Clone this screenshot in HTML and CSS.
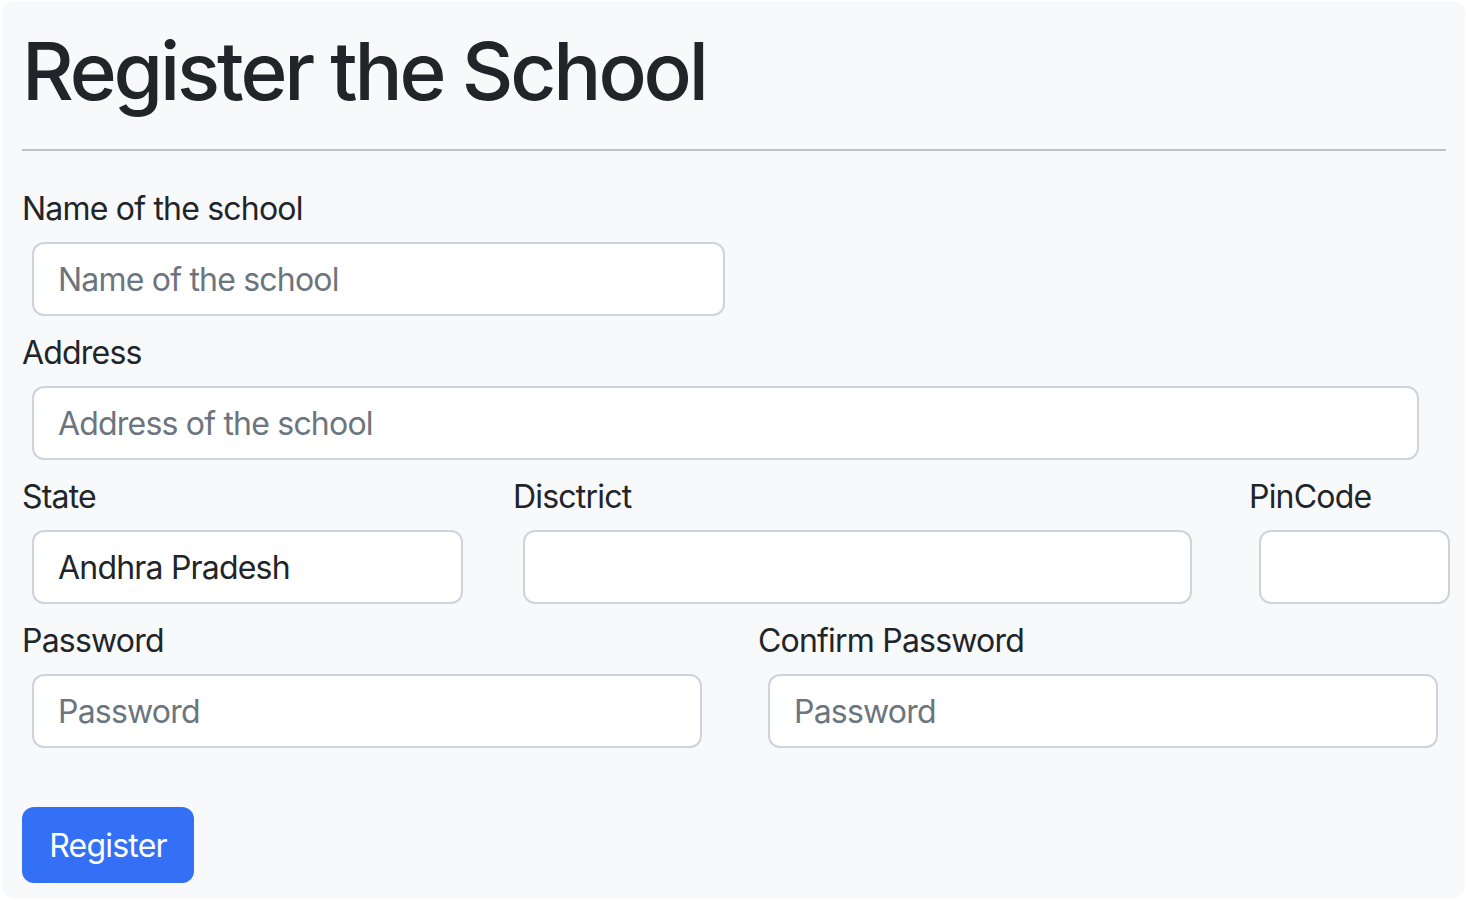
FILE: index.html
```html
<!DOCTYPE html>
<html lang="en">
<head>
<meta charset="utf-8">
<title>Register the School</title>
<link rel="stylesheet" href="styles.css">
</head>
<body>
<div class="panel">
  <h1 class="title">Register the School</h1>
  <hr class="divider">
  <form class="form">
    <div class="field">
      <label class="label">Name of the school</label>
      <input class="input w-name" type="text" placeholder="Name of the school">
    </div>
    <div class="field">
      <label class="label">Address</label>
      <input class="input w-address" type="text" placeholder="Address of the school">
    </div>
    <div class="row row-3">
      <div class="field">
        <label class="label">State</label>
        <input class="input w-state" type="text" value="Andhra Pradesh">
      </div>
      <div class="field">
        <label class="label">Disctrict</label>
        <input class="input w-district" type="text">
      </div>
      <div class="field">
        <label class="label">PinCode</label>
        <input class="input w-pin" type="text">
      </div>
    </div>
    <div class="row row-2">
      <div class="field">
        <label class="label">Password</label>
        <input class="input w-pass" type="password" placeholder="Password">
      </div>
      <div class="field">
        <label class="label">Confirm Password</label>
        <input class="input w-pass" type="password" placeholder="Password">
      </div>
    </div>
    <button class="btn" type="button">Register</button>
  </form>
</div>
</body>
</html>
```

FILE: styles.css
```css
* { box-sizing: border-box; }

html, body {
  margin: 0;
  padding: 0;
  background: #ffffff;
}

body {
  font-family: Inter, "Liberation Sans", sans-serif;
  color: #212529;
}

.panel {
  margin: 1px 1px 0 2px;
  height: 897px;
  padding: 22px 19px 0 20px;
  background: #f8f9fa;
  border-radius: 12px;
}

.title {
  margin: 0;
  font-size: 80px;
  line-height: 96px;
  font-weight: 500;
  letter-spacing: -3.1px;
  color: #212529;
}

.divider {
  margin: 30px 0 0 0;
  height: 2px;
  border: none;
  background: #c0c1c2;
}

.form {
  display: flex;
  flex-direction: column;
  padding-top: 27px;
}

.field {
  display: flex;
  flex-direction: column;
  align-items: flex-start;
}

.form > .field + .field,
.form > .field + .row,
.form > .row + .row {
  margin-top: 6px;
}

.label {
  font-size: 32px;
  line-height: 48px;
  padding-top: 7px;
  margin-bottom: 9px;
  letter-spacing: -0.8px;
  color: #212529;
}

.input {
  margin-left: 10px;
  height: 74px;
  padding: 0 24px;
  font-family: Inter, "Liberation Sans", sans-serif;
  font-size: 32px;
  letter-spacing: -0.8px;
  color: #212529;
  background: #ffffff;
  border: 2px solid #ced4da;
  border-radius: 12px;
  outline: none;
}

.input::placeholder {
  color: #6c757d;
}

.w-name { width: 693px; }
.w-address { width: 1387px; }
.w-state { width: 431px; }
.w-district { width: 669px; }
.w-pin { width: 191px; }
.w-pass { width: 670px; }

.row {
  display: grid;
}

.row-3 {
  grid-template-columns: 491px 736px 1fr;
}

.row-2 {
  grid-template-columns: 736px 1fr;
}

.btn {
  align-self: flex-start;
  margin-top: 59px;
  height: 76px;
  width: 172px;
  padding: 0 24px;
  font-family: Inter, "Liberation Sans", sans-serif;
  font-size: 32px;
  letter-spacing: -0.8px;
  color: #ffffff;
  background: #3370f5;
  border: none;
  border-radius: 12px;
}
```
